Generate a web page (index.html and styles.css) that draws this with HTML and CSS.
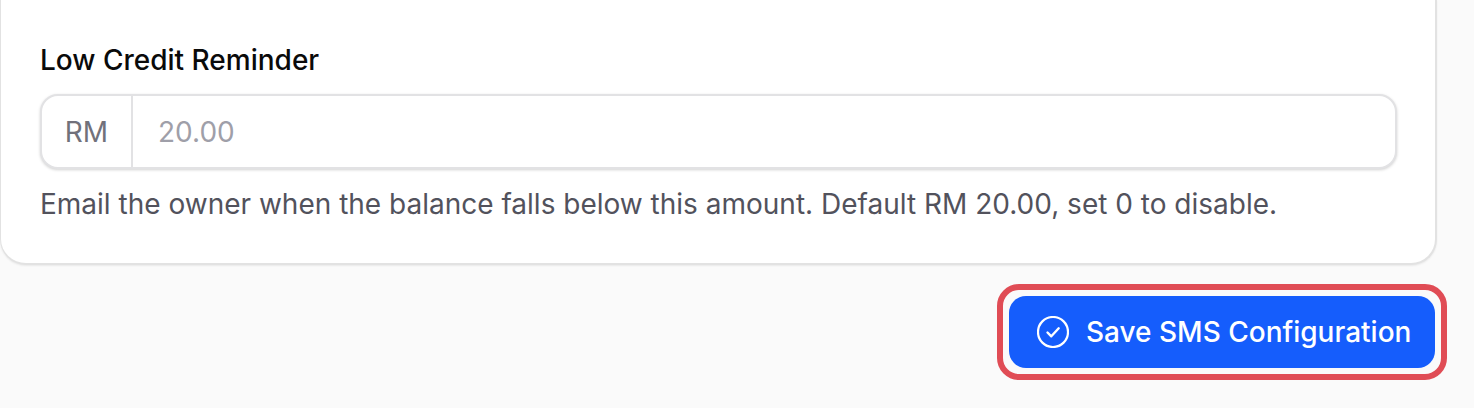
FILE: index.html
```html
<!DOCTYPE html>
<html lang="en">
<head>
<meta charset="utf-8">
<title>SMS Configuration</title>
<link rel="stylesheet" href="styles.css">
</head>
<body>
<main class="page">
  <section class="card">
    <label class="label" for="low-credit">Low Credit Reminder</label>
    <div class="input-group">
      <span class="prefix">RM</span>
      <input class="input" id="low-credit" type="text" placeholder="20.00">
    </div>
    <p class="help">Email the owner when the balance falls below this amount. Default RM 20.00, set 0 to disable.</p>
  </section>
  <div class="actions">
    <div class="highlight">
      <button class="save" type="button">
        <svg class="save-icon" viewBox="0 0 32 32" fill="none" stroke="currentColor" stroke-linecap="round" stroke-linejoin="round" aria-hidden="true">
          <circle cx="16" cy="16" r="15" stroke-width="2.2"></circle>
          <path d="M10.5 16.5l3.8 3.8 7.4-8" stroke-width="2.4"></path>
        </svg>
        <span>Save SMS Configuration</span>
      </button>
    </div>
  </div>
</main>
</body>
</html>
```
FILE: styles.css
```css
* {
  box-sizing: border-box;
}

html,
body {
  margin: 0;
  height: 100%;
  overflow: hidden;
  background: #fafafa;
}

body {
  font-family: Inter, "Noto Sans", sans-serif;
}

.page {
  width: 1474px;
  height: 408px;
}

.card {
  width: 1437px;
  height: 265px;
  padding: 43px 39px 0 39px;
  background: #fff;
  border: solid #e2e2e2;
  border-width: 0 2px 2px 1px;
  border-radius: 0 0 26px 26px;
  box-shadow: 0 1px 2px rgba(0, 0, 0, 0.07);
}

.label {
  display: block;
  font-size: 28px;
  line-height: 34px;
  font-weight: 500;
  color: #0a0a0a;
}

.input-group {
  display: flex;
  align-items: stretch;
  width: 1357px;
  height: 75px;
  margin-top: 17px;
  background: #fff;
  border: 2px solid #e2e2e4;
  border-radius: 18px;
  box-shadow: 0 1px 3px rgba(0, 0, 0, 0.18);
  overflow: hidden;
}

.prefix {
  display: flex;
  align-items: center;
  justify-content: center;
  width: 91px;
  border-right: 2px solid #e2e2e4;
  font-size: 28px;
  color: #71717b;
}

.input {
  flex: 1;
  min-width: 0;
  padding: 0 25px;
  border: 0;
  outline: 0;
  background: transparent;
  font: inherit;
  font-size: 28px;
}

.input::placeholder {
  color: #9f9fa9;
  opacity: 1;
}

.help {
  margin: 17px 0 0;
  font-size: 28px;
  line-height: 36px;
  color: #52525c;
}

.actions {
  display: flex;
  justify-content: flex-end;
  padding: 19px 27px 0 0;
}

.highlight {
  padding: 6px;
  border: 6px solid #e04c55;
  border-radius: 22px;
}

.save {
  display: flex;
  align-items: center;
  gap: 17px;
  width: 426px;
  height: 72px;
  padding: 0 0 0 28px;
  border: 0;
  border-radius: 17px;
  background: #155dfc;
  color: #fff;
  font: inherit;
  font-size: 28px;
  font-weight: 500;
}

.save-icon {
  width: 32px;
  height: 32px;
  flex: none;
}
```
